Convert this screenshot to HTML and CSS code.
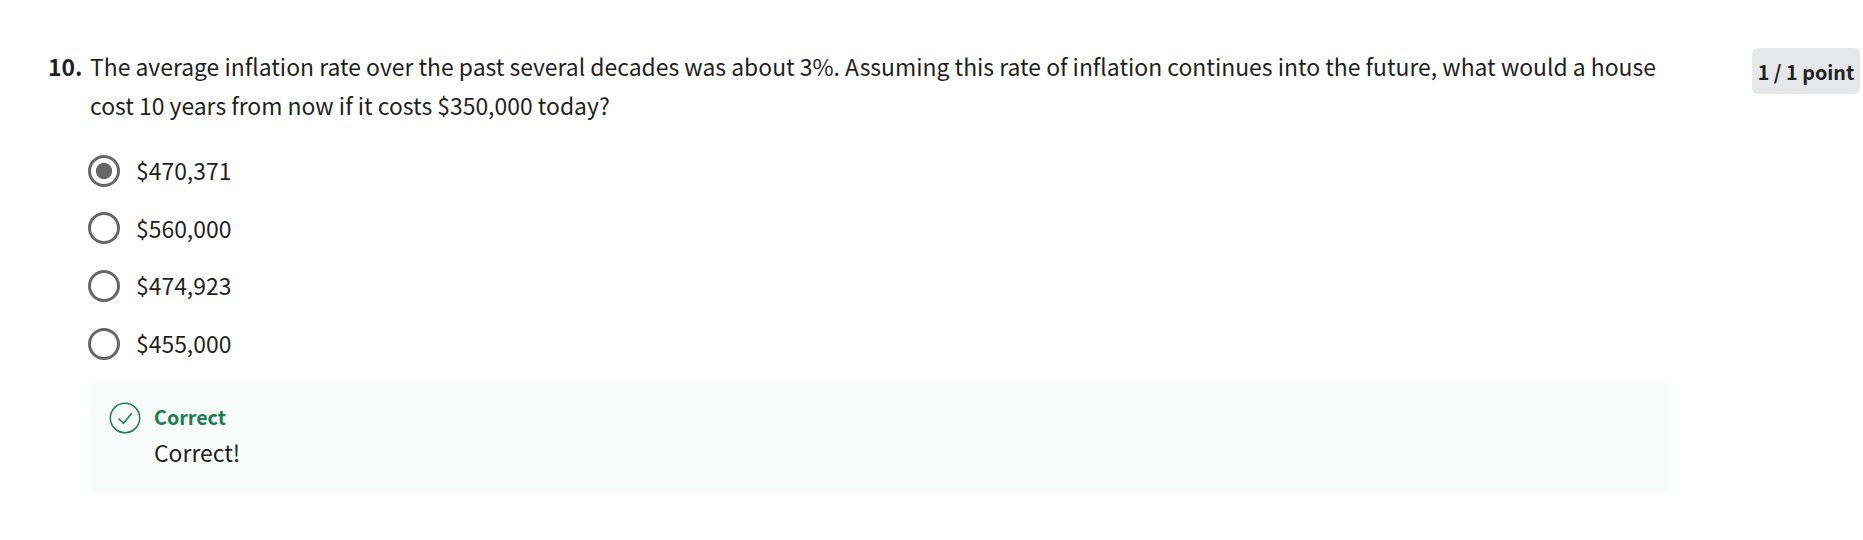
FILE: index.html
```html
<!DOCTYPE html>
<html lang="en">
<head>
<meta charset="utf-8">
<title>Question 10</title>
<link rel="stylesheet" href="styles.css">
</head>
<body>
<main class="question">
  <div class="number">10.</div>
  <section class="content">
    <p class="prompt">The average inflation rate over the past several decades was about 3%. Assuming this rate of inflation continues into the future, what would a house<br>cost 10 years from now if it costs $350,000 today?</p>
    <div class="options">
      <div class="option"><span class="radio checked"></span><span class="label">$470,371</span></div>
      <div class="option"><span class="radio"></span><span class="label">$560,000</span></div>
      <div class="option"><span class="radio"></span><span class="label">$474,923</span></div>
      <div class="option"><span class="radio"></span><span class="label">$455,000</span></div>
    </div>
    <div class="feedback">
      <svg class="check" viewBox="0 0 32 32"><circle cx="16" cy="16" r="14.7"/><path d="M9.5 16.5l5 4.8 8.2-10.1"/></svg>
      <div><div class="status">Correct</div><div class="message">Correct!</div></div>
    </div>
  </section>
  <div class="points">1 / 1 point</div>
</main>
</body>
</html>
```
FILE: styles.css
```css
* { box-sizing: border-box; }
body { margin: 0; background: #fff; color: #1f1f1f; font: 22.91px/39px "Noto Sans CJK SC", sans-serif; }
.question { display: flex; align-items: flex-start; height: 540px; padding: 47px 3px 0 48px; white-space: nowrap; }
.number { width: 42px; font-weight: 700; }
.content { width: 1580px; }
.prompt { margin: 0; }
.options { padding-top: 17px; }
.option { display: flex; align-items: center; gap: 16px; height: 57.6px; margin-left: -2px; }
.radio { display: block; width: 32px; height: 32px; border: 3px solid #666; border-radius: 50%; }
.checked { background: radial-gradient(circle, #666 7.7px, #fff 8.5px); }
.feedback { display: flex; gap: 13px; height: 109px; margin-top: 10.6px; padding: 16px 19px; background: #f7fbfa; line-height: 36px; }
.check { width: 32px; height: 32px; margin-top: 3px; fill: none; stroke: #1d7c50; stroke-width: 1.5; }
.status { color: #1d7c50; font-size: 19.7px; font-weight: 700; }
.message { line-height: 34px; }
.points { width: 108px; height: 46px; margin: 1px 0 0 auto; border-radius: 6px; background: #e5e7e8; font-size: 19.8px; font-weight: 700; line-height: 48px; text-align: center; }
```
